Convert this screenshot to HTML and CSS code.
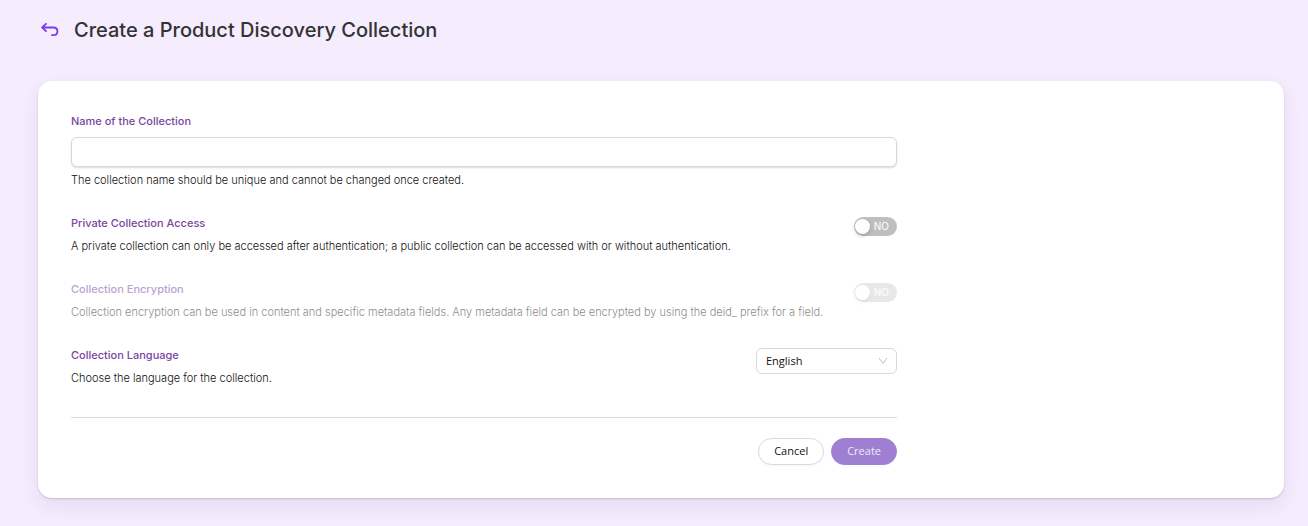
FILE: index.html
```html
<!DOCTYPE html>
<html lang="en">
<head>
  <meta charset="UTF-8">
  <meta name="viewport" content="width=device-width, initial-scale=1.0">
  <title>Create a Product Discovery Collection</title>
  <link rel="stylesheet" href="styles.css">
</head>
<body>
  <header class="page-header">
    <a href="#" class="back-link" aria-label="Back">
      <svg width="18" height="16" viewBox="0 0 18 16" fill="none" stroke="currentColor" stroke-width="1.8" stroke-linecap="round" stroke-linejoin="round">
        <path d="M5 1.8L1.2 5.5L5 9.2"/>
        <path d="M2 5.5H12.4C15 5.5 16.4 7.2 16.4 9.2C16.4 11.6 14.8 13.2 12.4 13.2H11"/>
      </svg>
    </a>
    <h1>Create a Product Discovery Collection</h1>
  </header>

  <main class="card">
    <form class="collection-form">
      <div class="field">
        <label class="field-label" for="name">Name of the Collection</label>
        <input type="text" id="name" class="text-input">
        <p class="help">The collection name should be unique and cannot be changed once created.</p>
      </div>

      <div class="field-row">
        <div class="field-text">
          <label class="field-label" for="private">Private Collection Access</label>
          <p class="help">A private collection can only be accessed after authentication; a public collection can be accessed with or without authentication.</p>
        </div>
        <label class="switch">
          <input type="checkbox" id="private" role="switch">
          <span class="switch-text">NO</span>
        </label>
      </div>

      <div class="field-row disabled">
        <div class="field-text">
          <label class="field-label" for="encryption">Collection Encryption</label>
          <p class="help">Collection encryption can be used in content and specific metadata fields. Any metadata field can be encrypted by using the deid_ prefix for a field.</p>
        </div>
        <label class="switch">
          <input type="checkbox" id="encryption" role="switch" disabled>
          <span class="switch-text">NO</span>
        </label>
      </div>

      <div class="field-row">
        <div class="field-text">
          <label class="field-label" for="language">Collection Language</label>
          <p class="help">Choose the language for the collection.</p>
        </div>
        <div class="select-box">
          <select id="language">
            <option>English</option>
          </select>
          <svg class="select-arrow" width="10" height="8" viewBox="0 0 10 8" fill="none" stroke="#bfbfbf" stroke-width="1">
            <path d="M1 1L5 6.5L9 1"/>
          </svg>
        </div>
      </div>

      <div class="actions">
        <button type="button" class="btn">Cancel</button>
        <button type="submit" class="btn btn-primary">Create</button>
      </div>
    </form>
  </main>
</body>
</html>
```
FILE: styles.css
```css
* {
  box-sizing: border-box;
}

body {
  margin: 0;
  padding: 16px 24px 28px 38px;
  background-color: #f5ecfe;
  font-family: Inter, "Liberation Sans", sans-serif;
  font-size: 11px;
  font-weight: 300;
  color: #111;
}

.page-header {
  display: flex;
  align-items: center;
  gap: 15px;
  padding-left: 3px;
  margin-bottom: 37px;
}

.back-link {
  display: flex;
  color: #7c3aed;
}

h1 {
  margin: 0;
  font-size: 20px;
  line-height: 28px;
  font-weight: 500;
  color: #333;
}

.card {
  background-color: #fff;
  border-radius: 14px;
  padding: 32px 33px 33px;
  box-shadow: 0 1px 2px rgba(60, 40, 90, 0.2), 0 8px 20px rgba(60, 40, 90, 0.08);
}

.collection-form {
  width: 70%;
}

.field {
  margin-bottom: 27px;
}

.field-label {
  display: block;
  line-height: 16px;
  font-weight: 500;
  color: #7a469f;
}

.help {
  margin: 7px 0 0;
  line-height: 16px;
}

.text-input {
  display: block;
  width: 100%;
  height: 30px;
  margin-top: 8px;
  padding: 4px 11px;
  border: 1px solid #d9d9d9;
  border-radius: 6px;
  box-shadow: 0 1px 2px rgba(0, 0, 0, 0.15);
  font: inherit;
}

.text-input + .help {
  margin-top: 5px;
}

.field-row {
  display: flex;
  justify-content: space-between;
  align-items: flex-start;
  margin-bottom: 27px;
}

.disabled .field-label,
.disabled .help {
  opacity: 0.5;
}

/* toggle switch */
.switch {
  position: relative;
  flex: none;
  width: 43px;
  height: 19px;
  margin-top: 2px;
}

.switch input {
  appearance: none;
  display: block;
  width: 100%;
  height: 100%;
  margin: 0;
  padding: 2px 1px;
  border-radius: 10px;
  background-color: #bfbfbf;
}

.switch input::before {
  content: "";
  display: block;
  width: 15px;
  height: 15px;
  border-radius: 50%;
  background-color: #fff;
  box-shadow: 0 2px 4px rgba(0, 35, 11, 0.2);
}

.switch-text {
  position: absolute;
  top: 0;
  right: 8px;
  line-height: 19px;
  font-size: 10px;
  font-weight: 400;
  color: #fff;
}

.disabled .switch {
  opacity: 0.35;
}

.select-box {
  position: relative;
  width: 141px;
  margin-top: 1px;
}

select {
  appearance: none;
  display: block;
  width: 100%;
  height: 26px;
  padding: 0 9px 2px;
  border: 1px solid #d9d9d9;
  border-radius: 6px;
  background-color: #fff;
  font-family: "Open Sans", sans-serif;
  font-size: 11px;
  color: #111;
}

.select-arrow {
  position: absolute;
  top: 9px;
  right: 9px;
  pointer-events: none;
}

.actions {
  display: flex;
  justify-content: flex-end;
  gap: 7px;
  margin-top: 31px;
  padding-top: 20px;
  border-top: 1px solid #d9d9d9;
}

.btn {
  height: 27px;
  padding: 0 15px 2px;
  border: 1px solid #d9d9d9;
  border-radius: 14px;
  background-color: #fff;
  box-shadow: 0 2px 0 rgba(0, 0, 0, 0.02);
  font-family: "Open Sans", sans-serif;
  font-size: 11px;
  color: #111;
}

.btn-primary {
  border-color: #9f7fd1;
  background-color: #9f7fd1;
  color: #f0e8fa;
}
```
